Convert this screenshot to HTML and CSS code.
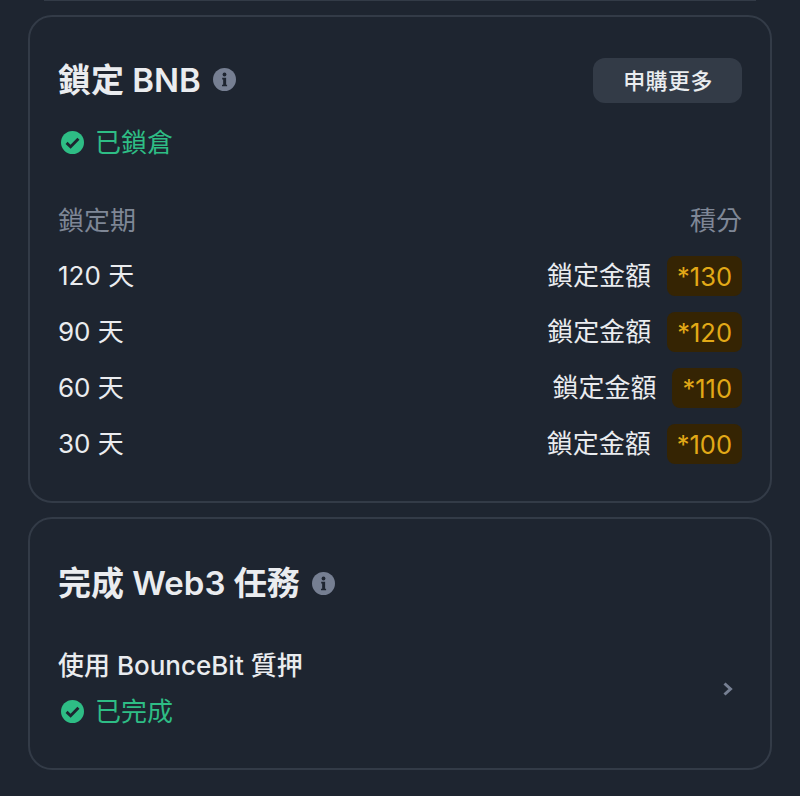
FILE: index.html
```html
<!DOCTYPE html>
<html lang="zh-Hant">
<head>
    <meta charset="UTF-8">
    <meta name="viewport" content="width=device-width, initial-scale=1.0">
    <title>積分任務</title>
    <link rel="stylesheet" href="styles.css">
</head>
<body>
    <div class="top-edge"></div>
    <section class="card card-lock">
        <div class="card-head">
            <h2 class="card-title">鎖定 BNB
                <svg class="info-icon" viewBox="0 0 24 24"><circle cx="12" cy="12" r="12" fill="#767f92"/><path d="M9.6 10.2h4.100v7.200h1v1.700H9.400v-1.700h1.200v-5.500h-1z" fill="#1e2530"/><circle cx="12" cy="6.800" r="2" fill="#1e2530"/></svg>
            </h2>
            <button class="button">申購更多</button>
        </div>
        <div class="status status-lock">
            <svg class="check-icon" viewBox="0 0 24 24"><circle cx="12" cy="12" r="12" fill="#2ebd85"/><path d="M5.8 12.400l4.200 4 8.200-8.400" fill="none" stroke="#1e2530" stroke-width="3"/></svg>
            已鎖倉
        </div>
        <div class="table-head"><span>鎖定期</span><span>積分</span></div>
        <div class="rows">
            <div class="row"><span class="row-text">120 天</span><div class="row-value"><span class="row-text">鎖定金額</span><span class="badge">*130</span></div></div>
            <div class="row"><span class="row-text">90 天</span><div class="row-value"><span class="row-text">鎖定金額</span><span class="badge">*120</span></div></div>
            <div class="row"><span class="row-text">60 天</span><div class="row-value"><span class="row-text">鎖定金額</span><span class="badge">*110</span></div></div>
            <div class="row"><span class="row-text">30 天</span><div class="row-value"><span class="row-text">鎖定金額</span><span class="badge">*100</span></div></div>
        </div>
    </section>
    <section class="card card-task">
        <h2 class="card-title">完成 Web3 任務
            <svg class="info-icon" viewBox="0 0 24 24"><circle cx="12" cy="12" r="12" fill="#767f92"/><path d="M9.6 10.2h4.100v7.200h1v1.700H9.400v-1.700h1.200v-5.500h-1z" fill="#1e2530"/><circle cx="12" cy="6.800" r="2" fill="#1e2530"/></svg>
        </h2>
        <div class="task">
            <div>
                <div class="task-name">使用 BounceBit 質押</div>
                <div class="status">
                    <svg class="check-icon" viewBox="0 0 24 24"><circle cx="12" cy="12" r="12" fill="#2ebd85"/><path d="M5.8 12.400l4.200 4 8.200-8.400" fill="none" stroke="#1e2530" stroke-width="3"/></svg>
                    已完成
                </div>
            </div>
            <svg class="chevron" viewBox="0 0 12 16"><path d="M2.500 2.500L8.500 8l-6 5.500" fill="none" stroke="#767f92" stroke-width="3"/></svg>
        </div>
    </section>
</body>
</html>
```

FILE: styles.css
```css
html, body { height: 100%; }
body { font-family: Inter, "Noto Sans CJK TC", sans-serif; margin: 0; padding: 0 28px; background-color: #1e2530; color: #eaecef; overflow: hidden; box-sizing: border-box; }
.top-edge { height: 1px; margin: 0 16px 14px; background-color: #333b47; }
.card { border: 2px solid #333b47; border-radius: 24px; padding: 28px; box-sizing: border-box; }
.card-lock { height: 488px; margin-bottom: 14px; padding-top: 27px; }
.card-task { height: 253px; padding-top: 27px; }
.card-head { display: flex; justify-content: space-between; align-items: center; height: 45px; margin-top: 14px; }
.card-title { display: flex; align-items: center; gap: 12px; margin: 0; font-size: 33px; line-height: 44px; font-weight: 600; }
.card-head .card-title { padding-bottom: 2px; }
.card-task .card-title { margin-top: 15px; }
.info-icon { width: 23px; height: 23px; }
.button { width: 149px; height: 45px; border: 0; border-radius: 12px; background-color: #333b47; color: #eaecef; font-family: inherit; font-size: 22px; letter-spacing: 0.4px; font-weight: 500; padding: 0 0 3px 1px; }
.status { display: flex; align-items: center; gap: 11px; padding-left: 3px; font-size: 26px; line-height: 36px; color: #2ebd85; }
.status-lock { margin-top: 22px; }
.check-icon { width: 23px; height: 23px; margin-top: -2px; }
.table-head { display: flex; justify-content: space-between; margin-top: 42px; font-size: 26px; line-height: 36px; color: #7f8796; }
.rows { margin-top: 9px; }
.row { display: flex; justify-content: space-between; align-items: center; height: 56px; font-size: 26px; }
.row-text { padding-bottom: 5px; }
.row-value { display: flex; align-items: center; gap: 16px; }
.badge { display: flex; align-items: center; height: 40px; padding: 0 10px; border-radius: 8px; background-color: #352403; color: #e2a917; font-size: 25.5px; }
.task { display: flex; justify-content: space-between; align-items: center; margin-top: 43px; }
.task-name { font-size: 26px; line-height: 36px; font-weight: 500; margin-bottom: 10px; }
.chevron { width: 12px; height: 16px; margin-right: 8px; }
```
